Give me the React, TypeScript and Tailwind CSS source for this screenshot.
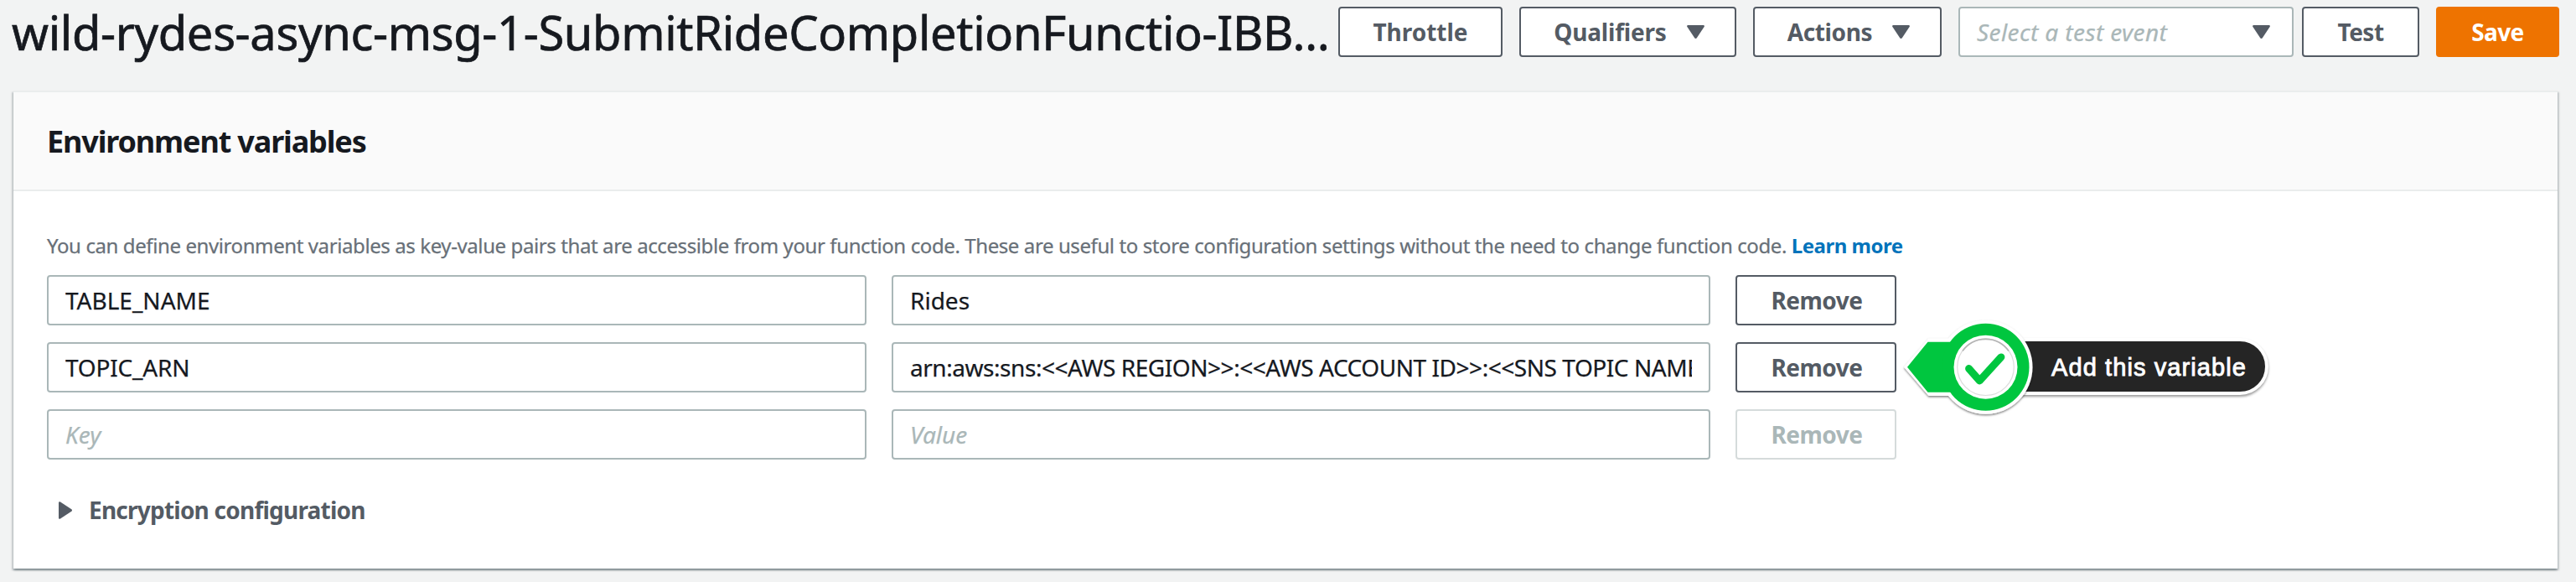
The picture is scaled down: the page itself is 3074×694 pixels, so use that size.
import type { ReactNode } from "react";

function Caret() {
  return (
    <svg className="block h-4 w-[21px] shrink-0 fill-[#545b64]" viewBox="0 0 21 16">
      <path d="M1.6 0h17.8c1.3 0 1.8 1 1.2 2L11.8 15.3c-.6.9-2 .9-2.6 0L.4 2C-.2 1 .3 0 1.6 0z" />
    </svg>
  );
}

function Button({ children, className = "" }: { children: ReactNode; className?: string }) {
  return (
    <button
      className={`flex h-[60px] shrink-0 items-center justify-center rounded-[4px] border-2 border-[#545b64] bg-white text-[28px] leading-none font-bold whitespace-nowrap text-[#545b64] ${className}`}
    >
      {children}
    </button>
  );
}

function Field({ value, placeholder, label, className = "" }: { value?: string; placeholder?: string; label: string; className?: string }) {
  return (
    <input
      aria-label={label}
      defaultValue={value}
      placeholder={placeholder}
      className={`block h-[60px] rounded-[4px] border-2 border-[#aab7b8] bg-white px-5 text-[28px] text-[#16191f] [-webkit-text-stroke:0.25px_#16191f] placeholder:text-[#aab7b8] placeholder:italic placeholder:opacity-100 placeholder:[-webkit-text-stroke:0.25px_#aab7b8] ${className}`}
    />
  );
}

function Callout() {
  return (
    <div className="absolute top-[-34px] left-[196px] h-[130px] w-[460px]">
      <div className="absolute top-[29px] left-[110px] flex h-[68px] w-[330px] items-center rounded-r-[34px] border-4 border-white bg-[#252525] pt-[4px] pl-[67px] font-['Liberation_Sans',sans-serif] text-[29px] tracking-[1.1px] whitespace-nowrap text-white [-webkit-text-stroke:0.9px_white] shadow-[0_2px_3px_rgba(0,0,0,0.4)]">
        Add this variable
      </div>
      <svg className="absolute top-0 left-0 h-[130px] w-[180px]" viewBox="0 0 180 130">
        <defs>
          <filter id="drop" x="-10%" y="-10%" width="120%" height="120%">
            <feDropShadow dx="0" dy="1.5" stdDeviation="1.2" floodColor="#000" floodOpacity="0.5" />
          </filter>
        </defs>
        <g filter="url(#drop)">
          <path d="M5 63.7 34.5 29.5H70V98H34.5Z" fill="#fff" />
          <circle cx="102.5" cy="63.7" r="56" fill="#fff" />
        </g>
        <path d="M9 63.7 33.5 33.7H70V93.7H33.5Z" fill="#00c63f" />
        <circle cx="102.5" cy="63.7" r="52" fill="#00c63f" />
        <circle cx="102.5" cy="63.7" r="38" fill="#fff" />
        <circle cx="102.5" cy="63.7" r="33.8" fill="none" stroke="#dcdcdc" strokeWidth="1.2" />
        <path d="M75 44.5a33.8 33.8 0 0 1 55 0" fill="none" stroke="#b4b4b4" strokeWidth="1.6" />
        <path d="M82.5 65.5 95.3 80 121 51.8" fill="none" stroke="#00c63f" strokeWidth="8.8" strokeLinecap="round" strokeLinejoin="round" />
      </svg>
    </div>
  );
}

const rows = [
  { key: "TABLE_NAME", value: "Rides", keyClass: "", valueClass: "" },
  {
    key: "TOPIC_ARN",
    value: "arn:aws:sns:<<AWS REGION>>:<<AWS ACCOUNT ID>>:<<SNS TOPIC NAME>>",
    keyClass: "tracking-[-0.2px]",
    valueClass: "tracking-[-0.45px]",
    callout: true,
  },
  { keyClass: "", valueClass: "", disabled: true },
];

export default function App() {
  return (
    <div className="h-[694px] w-[3074px] overflow-hidden bg-[#f2f3f3] font-['Noto_Sans',sans-serif] text-[#16191f]">
      <header className="flex h-[108px] items-start pt-2 pl-[14px]">
        <h1 className="mt-[-8px] w-[1583px] shrink-0 text-[56px] leading-[76px] tracking-[-0.33px] whitespace-nowrap [-webkit-text-stroke:0.7px_#16191f]">
          wild-rydes-async-msg-1-SubmitRideCompletionFunctio-IBB…
        </h1>
        <Button className="w-[196px]">Throttle</Button>
        <Button className="ml-5 w-[259px] gap-[24px] pl-[3px] tracking-[-0.2px]">
          Qualifiers
          <Caret />
        </Button>
        <Button className="ml-5 w-[225px] gap-[24px] pl-[3px] tracking-[-0.4px]">
          Actions
          <Caret />
        </Button>
        <div className="ml-5 flex h-[60px] w-[400px] items-center justify-between rounded-[4px] border-2 border-[#aab7b8] bg-white pr-[26px] pl-5 text-[28px] leading-none tracking-[0.4px] text-[#aab7b8] italic [-webkit-text-stroke:0.25px_#aab7b8]">
          Select a test event
          <Caret />
        </div>
        <Button className="ml-[10px] w-[140px] tracking-[-0.5px]">Test</Button>
        <button className="ml-5 flex h-[60px] w-[147px] items-center justify-center rounded-[4px] bg-[#ee7300] text-[28px] leading-none font-bold tracking-[-0.6px] text-white">
          Save
        </button>
      </header>

      <section className="ml-4 h-[570px] w-[3036px] border-t-2 border-[#eaeded] bg-white shadow-[0_2px_2px_0_rgba(0,28,36,0.3),2px_2px_2px_0_rgba(0,28,36,0.15),-2px_2px_2px_0_rgba(0,28,36,0.15)]">
        <div className="flex h-[118px] items-center border-b-2 border-[#eaeded] bg-[#fafafa] pt-[2px] pl-10">
          <h2 className="text-[36px] leading-[44px] font-bold tracking-[-1.15px]">Environment variables</h2>
        </div>
        <div className="px-10 pt-[45px]">
          <p className="h-[55px] text-[24px] leading-[40px] tracking-[-0.4px] whitespace-nowrap text-[#687078] [-webkit-text-stroke:0.25px_#687078]">
            You can define environment variables as key-value pairs that are accessible from your function code. These are useful
            to store configuration settings without the need to change function code.{" "}
            <a className="font-bold tracking-[-0.5px] text-[#0073bb] [-webkit-text-stroke:0]">Learn more</a>
          </p>
          <div className="flex flex-col gap-5">
            {rows.map((r, i) => (
              <div key={i} className="flex">
                <Field label="Key" value={r.key} placeholder="Key" className={`w-[978px] ${r.keyClass}`} />
                <Field label="Value" value={r.value} placeholder="Value" className={`ml-[30px] w-[977px] ${r.valueClass}`} />
                <div className="relative ml-[30px]">
                  <Button className={`w-[192px] pl-[2px] tracking-[-0.5px] ${r.disabled ? "!border-[#d5dbdb] !text-[#aab7b8]" : ""}`}>
                    Remove
                  </Button>
                  {r.callout && <Callout />}
                </div>
              </div>
            ))}
          </div>
          <div className="mt-[40px] flex h-10 items-center pl-[14px] text-[28px] leading-10 font-bold tracking-[-0.77px] text-[#545b64]">
            <svg className="mr-[20px] block h-[21px] w-4 fill-[#545b64]" viewBox="0 0 16 21">
              <path d="M0 1.6v17.8c0 1.3 1 1.8 2 1.2l13.3-8.8c.9-.6.9-2 0-2.6L2 .4C1-.2 0 .3 0 1.6z" />
            </svg>
            Encryption configuration
          </div>
        </div>
      </section>
    </div>
  );
}
